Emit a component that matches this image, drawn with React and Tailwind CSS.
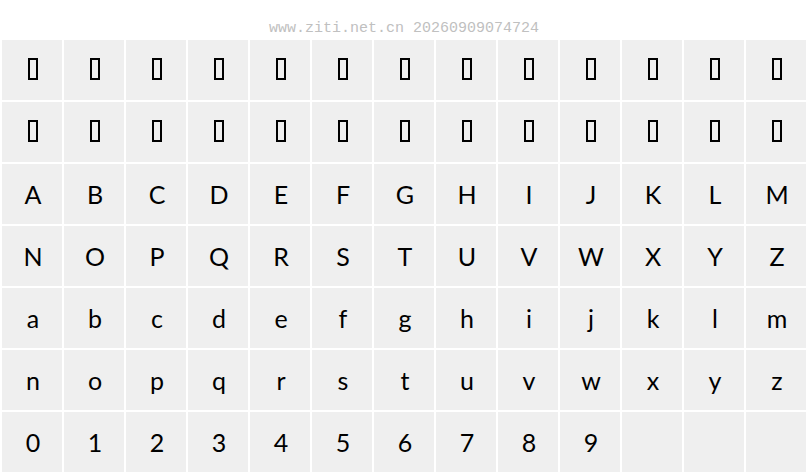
import React from "react";

const rows = [
  Array(13).fill(null),
  Array(13).fill(null),
  "ABCDEFGHIJKLM".split(""),
  "NOPQRSTUVWXYZ".split(""),
  "abcdefghijklm".split(""),
  "nopqrstuvwxyz".split(""),
  [..."0123456789".split(""), "", "", ""],
];

export default function App() {
  return (
    <div className="w-[808px] h-[476px] bg-white overflow-hidden">
      <div className="h-[40px] flex items-center justify-center pt-[16px]">
        <span className="text-[15px] leading-none text-[#c0c0c0] font-['Liberation_Mono',monospace]">
          www.ziti.net.cn 20260909074724
        </span>
      </div>
      <div className="ml-[2px] grid grid-cols-[repeat(13,60px)] auto-rows-[60px] gap-[2px]">
        {rows.flatMap((row, r) =>
          row.map((ch, c) => (
            <div
              key={r + "-" + c}
              className="bg-[#efefef] flex items-center justify-center"
            >
              {ch === null ? (
                <div className="w-[10px] h-[22px] border-2 border-black ml-[2px] -mt-[2px]" />
              ) : (
                <span className="text-[25px] leading-none font-normal text-black font-['Lato',sans-serif] ml-[2px]">
                  {ch}
                </span>
              )}
            </div>
          ))
        )}
      </div>
    </div>
  );
}
